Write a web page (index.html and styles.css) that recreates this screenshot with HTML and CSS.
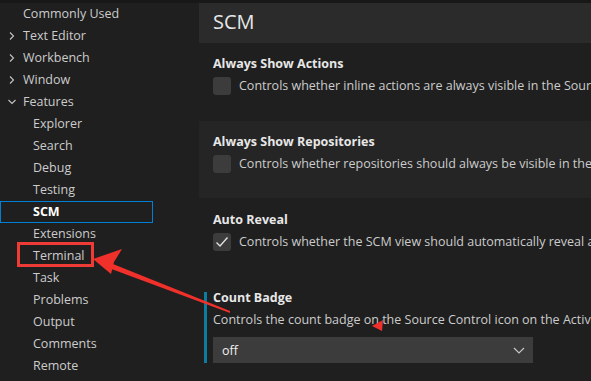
FILE: index.html
```html
<!DOCTYPE html>
<html>
<head>
<meta charset="utf-8">
<link rel="stylesheet" href="styles.css">
</head>
<body>
<div class="page">
  <div class="topstrip"></div>
  <div class="main">
    <nav class="sidebar">
      <div class="row top"><span class="chev"></span>Commonly Used</div>
      <div class="row top"><span class="chev"><svg width="10" height="10" viewBox="0 0 10 10"><path d="M3 1.5 L6.5 5 L3 8.5" fill="none" stroke="#c5c5c5" stroke-width="1.1"/></svg></span>Text Editor</div>
      <div class="row top"><span class="chev"><svg width="10" height="10" viewBox="0 0 10 10"><path d="M3 1.5 L6.5 5 L3 8.5" fill="none" stroke="#c5c5c5" stroke-width="1.1"/></svg></span>Workbench</div>
      <div class="row top"><span class="chev"><svg width="10" height="10" viewBox="0 0 10 10"><path d="M3 1.5 L6.5 5 L3 8.5" fill="none" stroke="#c5c5c5" stroke-width="1.1"/></svg></span>Window</div>
      <div class="row top"><span class="chev"><svg width="10" height="10" viewBox="0 0 10 10"><path d="M1.5 3 L5 6.5 L8.5 3" fill="none" stroke="#c5c5c5" stroke-width="1.1"/></svg></span>Features</div>
      <div class="row child">Explorer</div>
      <div class="row child">Search</div>
      <div class="row child">Debug</div>
      <div class="row child">Testing</div>
      <div class="row child selected">SCM</div>
      <div class="row child">Extensions</div>
      <div class="row child">Terminal</div>
      <div class="row child">Task</div>
      <div class="row child">Problems</div>
      <div class="row child">Output</div>
      <div class="row child">Comments</div>
      <div class="row child">Remote</div>
    </nav>
    <section class="content">
      <div class="header">SCM</div>
      <div class="setting">
        <div class="title">Always Show Actions</div>
        <div class="desc-row"><span class="checkbox"></span><span class="desc">Controls whether inline actions are always visible in the Source Control view.</span></div>
      </div>
      <div class="setting hover">
        <div class="title">Always Show Repositories</div>
        <div class="desc-row"><span class="checkbox"></span><span class="desc">Controls whether repositories should always be visible in the SCM view.</span></div>
      </div>
      <div class="setting">
        <div class="title">Auto Reveal</div>
        <div class="desc-row"><span class="checkbox"><svg width="18" height="18" viewBox="0 0 18 18"><path d="M3.5 9.5 L7 13 L14.5 4.5" fill="none" stroke="#e0e0e0" stroke-width="1.4"/></svg></span><span class="desc">Controls whether the SCM view should automatically reveal and select files when opening them.</span></div>
      </div>
      <div class="setting modified">
        <div class="title">Count Badge</div>
        <div class="desc plain">Controls the count badge on the Source Control icon on the Activity Bar.</div>
        <div class="select"><span>off</span><svg width="14" height="14" viewBox="0 0 14 14"><path d="M2 5 L7 10 L12 5" fill="none" stroke="#c5c5c5" stroke-width="1.2"/></svg></div>
      </div>
    </section>
  </div>
  <div class="redbox"></div>
  <svg class="arrow" width="591" height="381" viewBox="0 0 591 381">
    <polygon points="108,262 230,311 230,313 106,267" fill="#f0302a"/>
    <polygon points="93,259 122,249 114,262 111,274" fill="#f0302a"/>
    <polygon points="372,326 383,320 382,331" fill="#f0302a"/>
  </svg>
</div>
</body>
</html>
```
FILE: styles.css
```css
html, body {
  margin: 0;
  padding: 0;
  background: #1f1f1f;
}
.page {
  position: relative;
  width: 591px;
  height: 381px;
  overflow: hidden;
  background: #1f1f1f;
  font-family: "Open Sans", "Noto Sans", sans-serif;
  font-size: 12.5px;
  color: #cccccc;
}
.topstrip {
  height: 3px;
  background: #181818;
}
.main {
  display: flex;
}
.sidebar {
  width: 199px;
  flex: none;
  display: flex;
  flex-direction: column;
}
.row {
  height: 22px;
  line-height: 22px;
  display: flex;
  align-items: center;
  white-space: nowrap;
  box-sizing: border-box;
}
.row.top {
  padding-left: 7px;
}
.chev {
  width: 16px;
  height: 22px;
  display: flex;
  align-items: center;
}
.row.child {
  padding-left: 33px;
}
.row.selected {
  width: 153px;
  border: 1px solid #007fd4;
  padding-left: 32px;
  font-weight: 700;
  color: #ffffff;
}
.content {
  flex: 1;
  min-width: 0;
}
.header {
  height: 40px;
  background: #2b2b2b;
  padding-left: 14px;
  font-size: 20px;
  line-height: 38px;
  color: #e7e7e7;
  box-sizing: border-box;
}
.setting {
  position: relative;
  height: 78px;
  padding: 12px 0 0 14px;
  box-sizing: border-box;
  white-space: nowrap;
  overflow: hidden;
}
.setting.hover {
  background: #252525;
  height: 77px;
}
.setting.hover + .setting {
  margin-top: 1px;
}
.title {
  font-weight: 700;
  color: #e7e7e7;
  line-height: 18px;
  height: 18px;
}
.desc-row {
  display: flex;
  align-items: center;
  margin-top: 4px;
  height: 18px;
}
.checkbox {
  width: 18px;
  height: 18px;
  flex: none;
  border-radius: 3px;
  background: #3c3c3c;
  margin-right: 8px;
  display: flex;
}
.desc {
  line-height: 18px;
  color: #cccccc;
}
.desc.plain {
  margin-top: 4px;
  height: 18px;
}
.modified::before {
  content: "";
  position: absolute;
  left: 5px;
  top: 15px;
  width: 3px;
  height: 71px;
  background: #0c7d9d;
}
.setting.modified {
  height: 104px;
}
.select {
  margin-top: 8px;
  width: 320px;
  height: 26px;
  background: #3c3c3c;
  display: flex;
  align-items: center;
  justify-content: space-between;
  padding: 0 7px 0 9px;
  box-sizing: border-box;
  color: #f0f0f0;
}
.redbox {
  position: absolute;
  left: 17px;
  top: 242px;
  width: 77px;
  height: 25px;
  border: 3px solid #ef3b36;
  box-sizing: border-box;
}
.arrow {
  position: absolute;
  left: 0;
  top: 0;
}
```
